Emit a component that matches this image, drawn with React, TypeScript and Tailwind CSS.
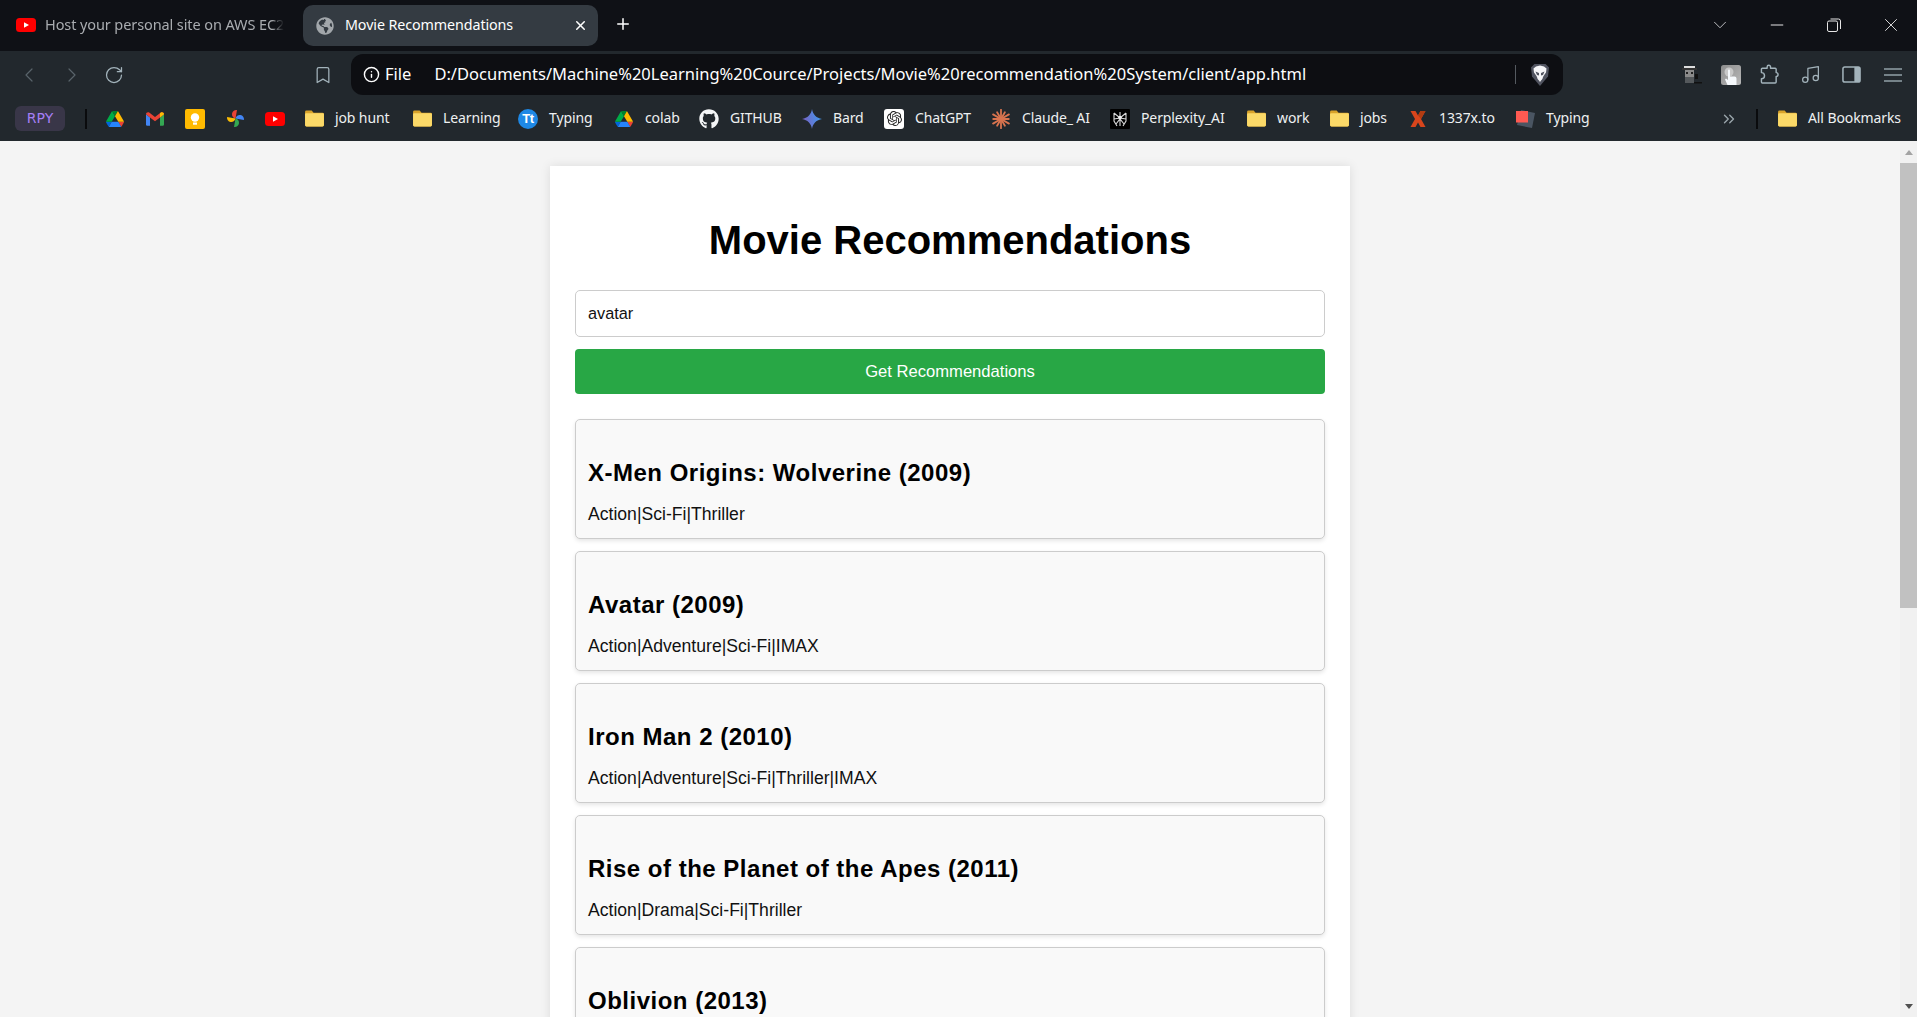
import React from "react";
import { ChevronLeft, ChevronRight, RotateCw, Bookmark, Info, Music, ChevronDown, ChevronsRight, Plus, X, Minus } from "lucide-react";
import { FaGithub, FaGlobeAmericas } from "react-icons/fa";
import { SiOpenai } from "react-icons/si";

const YT = ({ cls = "w-5 h-[14px]" }: { cls?: string }) => (
  <svg viewBox="0 0 20 14" className={cls}>
    <rect width="20" height="14" rx="3.5" fill="#ff0000" />
    <path d="M8 4.2 13 7l-5 2.8z" fill="#fff" />
  </svg>
);
const Drive = () => (
  <svg viewBox="0 0 87.3 78" className="w-[18px] h-[16px]">
    <path d="m6.6 66.85 3.85 6.65c.8 1.4 1.95 2.5 3.3 3.3l13.75-23.8h-27.5c0 1.55.4 3.1 1.2 4.5z" fill="#0066da" />
    <path d="m43.65 25-13.75-23.8c-1.35.8-2.5 1.9-3.3 3.3l-25.4 44a9.06 9.06 0 0 0 -1.2 4.5h27.5z" fill="#00ac47" />
    <path d="m73.55 76.8c1.35-.8 2.5-1.9 3.3-3.3l1.6-2.75 7.65-13.25c.8-1.4 1.2-2.95 1.2-4.5h-27.502l5.852 11.5z" fill="#ea4335" />
    <path d="m43.65 25 13.75-23.8c-1.35-.8-2.9-1.2-4.5-1.2h-18.5c-1.6 0-3.15.45-4.5 1.2z" fill="#00832d" />
    <path d="m59.8 53h-32.3l-13.75 23.8c1.35.8 2.9 1.2 4.5 1.2h50.8c1.6 0 3.15-.45 4.5-1.2z" fill="#2684fc" />
    <path d="m73.4 26.5-12.7-22c-.8-1.4-1.95-2.5-3.3-3.3l-13.75 23.8 16.15 28h27.45c0-1.55-.4-3.1-1.2-4.5z" fill="#ffba00" />
  </svg>
);
const Gmail = () => (
  <svg viewBox="0 0 18 14" className="w-[18px] h-[14px]">
    <path d="M0 2.2V12.6A1.2 1.2 0 0 0 1.2 13.8H4V5.5z" fill="#4285f4" />
    <path d="M18 2.2V12.6a1.2 1.2 0 0 1-1.2 1.2H14V5.5z" fill="#34a853" />
    <path d="M0 2.2C0 .6 1.8-.4 3.2.6L9 5 14.8.6C16.2-.4 18 .6 18 2.2L14 5.5 9 9.2 4 5.5z" fill="#ea4335" />
    <path d="M14 1.2 14.8.6C16.2-.4 18 .6 18 2.2L14 5.5z" fill="#fbbc04" />
  </svg>
);
const Keep = () => (
  <svg viewBox="0 0 20 20" className="w-5 h-5">
    <rect width="20" height="20" rx="2" fill="#ffba00" />
    <circle cx="10" cy="8.5" r="4.2" fill="#fff" />
    <rect x="8" y="13.5" width="4" height="2.2" fill="#fff" />
  </svg>
);
const Photos = () => (
  <svg viewBox="0 0 20 20" className="w-[19px] h-[19px]">
    <path d="M10 10V1A4.5 4.5 0 0 0 10 10z" fill="#ea4335" transform="rotate(10 10 10)" />
    <path d="M10 10V1A4.5 4.5 0 0 0 10 10z" fill="#4285f4" transform="rotate(100 10 10)" />
    <path d="M10 10V1A4.5 4.5 0 0 0 10 10z" fill="#34a853" transform="rotate(190 10 10)" />
    <path d="M10 10V1A4.5 4.5 0 0 0 10 10z" fill="#fbbc04" transform="rotate(280 10 10)" />
  </svg>
);
const Folder = () => (
  <svg viewBox="0 0 20 18" className="w-[19px] h-[17px]">
    <path d="M0 2a1.5 1.5 0 0 1 1.5-1.5H7l2 2.3h9.5A1.5 1.5 0 0 1 20 4.3V16a1.5 1.5 0 0 1-1.5 1.5h-17A1.5 1.5 0 0 1 0 16z" fill="#d9a32a" />
    <path d="M0 4.5A1 1 0 0 1 1 3.5h18a1 1 0 0 1 1 1V16a1.5 1.5 0 0 1-1.5 1.5h-17A1.5 1.5 0 0 1 0 16z" fill="#fbd968" />
  </svg>
);
const Tt = () => (
  <div className="w-5 h-5 rounded-full bg-[#1e88e5] flex items-center justify-center text-white font-bold text-[13px] leading-none tracking-[-0.5px] [font-family:'Liberation_Sans',sans-serif]">Tt</div>
);
const Bard = () => (
  <svg viewBox="0 0 20 20" className="w-5 h-5">
    <defs>
      <linearGradient id="bard" x1="0" y1="0.6" x2="1" y2="0.4">
        <stop offset="0" stopColor="#7b5fc0" />
        <stop offset="1" stopColor="#3f9bf0" />
      </linearGradient>
    </defs>
    <path d="M10 0C10.8 5.5 14.500 9.200 20 10 14.500 10.800 10.800 14.500 10 20 9.200 14.500 5.500 10.800 0 10 5.500 9.200 9.200 5.500 10 0z" fill="url(#bard)" />
  </svg>
);
const Gpt = () => (
  <div className="w-5 h-5 rounded-[3px] bg-white flex items-center justify-center text-[#222]">
    <SiOpenai size={15} />
  </div>
);
const Claude = () => (
  <svg viewBox="0 0 20 20" className="w-5 h-5" stroke="#d9744f" strokeWidth="1.8" strokeLinecap="round">
    {[0, 30, 60, 90, 120, 150, 180, 210, 240, 270, 300, 330].map((a) => (
      <line key={a} x1="10" y1="10" x2="10" y2={a % 60 === 0 ? 0.8 : 2.2} transform={`rotate(${a} 10 10)`} />
    ))}
  </svg>
);
const Perplexity = () => (
  <svg viewBox="0 0 20 20" className="w-5 h-5">
    <rect width="20" height="20" rx="1" fill="#000" />
    <g stroke="#d8d8d8" strokeWidth="1.1" fill="none">
      <path d="M10 3v14M4 4l6 5 6-5M4 4v8l3 5M16 4v8l-3 5M4 10l6-1 6 1M6 15l4-5 4 5" />
    </g>
    <circle cx="10" cy="8.500" r="1.800" fill="#eee" />
  </svg>
);
const XLogo = () => (
  <svg viewBox="0 0 16 16" className="w-[16px] h-[16px]">
    <path d="M0.500 0h5L8 4.500 10.500 0h5L11 8l4.500 8h-5L8 11.500 5.500 16h-5L5 8z" fill="#d8451c" />
    <path d="M8 4.500 10.500 0h5L11 8z" fill="#b23c12" />
  </svg>
);
const Cards = () => (
  <svg viewBox="0 0 20 20" className="w-5 h-5">
    <path d="M6 1 20 4l-3 15L2 16z" fill="#4a5562" />
    <rect x="1" y="2" width="12" height="11.500" fill="#ff5a52" />
  </svg>
);
const Brave = () => (
  <svg viewBox="0 0 18 22" className="w-[18px] h-[22px]">
    <path d="M3.500 0h11L18 3.500l-1 9L9 22l-8-9.500-1-9z" fill="#50535f" />
    <path d="M5 2.500 9 1.500l4 1 2.500 2-.5 4-2.500 3.500-1.500 3.500h-4L5.500 12 3 8.500l-.5-4z" fill="#f5f5f7" />
    <path d="M4.500 7.500 8 9v2.500L6 11zM13.500 7.500 10 9v2.500l2-.5z" fill="#50535f" />
    <path d="M6.500 14.500 9 13l2.500 1.500L9 18z" fill="#f5f5f7" />
  </svg>
);
const Spy = () => (
  <svg viewBox="0 0 22 22" className="w-[22px] h-[22px]">
    <rect x="3" y="2" width="11" height="2" fill="#ddd" />
    <rect x="1" y="4" width="15" height="2" fill="#333" />
    <rect x="4" y="6" width="9" height="7" fill="#8a8a8a" />
    <rect x="5" y="8" width="2" height="2" fill="#222" />
    <rect x="10" y="8" width="2" height="2" fill="#222" />
    <rect x="4" y="13" width="9" height="6" fill="#55595c" />
    <rect x="14" y="10" width="3" height="5" fill="#111" />
    <rect x="13" y="18" width="8" height="1.500" fill="#111" />
  </svg>
);
const Touch = () => (
  <svg viewBox="0 0 20 20" className="w-5 h-5">
    <defs>
      <linearGradient id="tg" x1="0" y1="0" x2="1" y2="1">
        <stop offset="0" stopColor="#8d8d8d" />
        <stop offset="1" stopColor="#b8b8b8" />
      </linearGradient>
    </defs>
    <rect width="20" height="20" rx="2.500" fill="url(#tg)" />
    <circle cx="8" cy="7" r="4.500" fill="#c8c8c8" />
    <path d="M7 5.500a1 1 0 0 1 2 0v6h4.500a2 2 0 0 1 2 2V20h-9L4 14.500l1-1 2 1.500z" fill="#f5f8fb" />
  </svg>
);
const PuzzleIcon = () => (
  <svg viewBox="0 0 20 22" className="w-[19px] h-[21px]" fill="none" stroke="#a3b3bb" strokeWidth="1.500" strokeLinejoin="round">
    <path d="M2.500 4.500H7.500V3a1.800 1.800 0 0 1 3.600 0v1.500H16a1 1 0 0 1 1 1V9a2 2 0 0 1 0 4v6a1 1 0 0 1-1 1H2.500a1 1 0 0 1-1-1v-3.500a3.200 3.200 0 0 0 0-6.500V5.500a1 1 0 0 1 1-1z" />
  </svg>
);
const SidePanel = () => (
  <svg viewBox="0 0 20 20" className="w-[19px] h-[19px]">
    <rect x="1" y="2" width="18" height="16" rx="2" fill="none" stroke="#a3b3bb" strokeWidth="1.600" />
    <rect x="13" y="2" width="6" height="16" rx="1" fill="#a3b3bb" />
  </svg>
);
const Hamburger = () => (
  <svg viewBox="0 0 18 14" className="w-[18px] h-[14px]" stroke="#a3b3bb" strokeWidth="1.300">
    <line x1="0" y1="1" x2="18" y2="1" />
    <line x1="0" y1="7" x2="18" y2="7" />
    <line x1="0" y1="13" x2="18" y2="13" />
  </svg>
);

const bookmarks: { w: string; icon: React.ReactNode; label?: string }[] = [
  { w: "w-[40px]", icon: <Drive /> },
  { w: "w-[40px]", icon: <Gmail /> },
  { w: "w-[40px]", icon: <Keep /> },
  { w: "w-[40px]", icon: <Photos /> },
  { w: "w-[39px]", icon: <YT /> },
  { w: "w-[108px]", icon: <Folder />, label: "job hunt" },
  { w: "w-[106px]", icon: <Folder />, label: "Learning" },
  { w: "w-[96px]", icon: <Tt />, label: "Typing" },
  { w: "w-[85px]", icon: <Drive />, label: "colab" },
  { w: "w-[103px]", icon: <FaGithub size={20} color="#f4f6f7" />, label: "GITHUB" },
  { w: "w-[82px]", icon: <Bard />, label: "Bard" },
  { w: "w-[107px]", icon: <Gpt />, label: "ChatGPT" },
  { w: "w-[119px]", icon: <Claude />, label: "Claude_ AI" },
  { w: "w-[136px]", icon: <Perplexity />, label: "Perplexity_AI" },
  { w: "w-[83px]", icon: <Folder />, label: "work" },
  { w: "w-[79px]", icon: <Folder />, label: "jobs" },
  { w: "w-[107px]", icon: <XLogo />, label: "1337x.to" },
  { w: "w-[100px]", icon: <Cards />, label: "Typing" },
];

const movies = [
  ["X-Men Origins: Wolverine (2009)", "Action|Sci-Fi|Thriller"],
  ["Avatar (2009)", "Action|Adventure|Sci-Fi|IMAX"],
  ["Iron Man 2 (2010)", "Action|Adventure|Sci-Fi|Thriller|IMAX"],
  ["Rise of the Planet of the Apes (2011)", "Action|Drama|Sci-Fi|Thriller"],
  ["Oblivion (2013)", "Action|Adventure|Sci-Fi|Thriller"],
];

const chrome = "[font-family:'Noto_Sans','Open_Sans',sans-serif]";

export default function App() {
  return (
    <div className="h-screen w-full flex flex-col overflow-hidden bg-[#f4f4f4]">
      <div className={`h-[51px] shrink-0 bg-[#0f1116] flex items-start ${chrome}`}>
        <div className="w-[303px] h-[41px] mt-[5px] flex items-center pl-[16px] pr-[14px] gap-[9px] shrink-0 pb-[1px]">
          <YT cls="w-5 h-[14px] shrink-0" />
          <span className="text-[14.5px] text-[#a9acb0] whitespace-nowrap tracking-[-0.1px] [mask-image:linear-gradient(to_left,transparent,black_12px)]">Host your personal site on AWS EC2</span>
        </div>
        <div className="w-[295px] h-[41px] mt-[5px] rounded-[10px] bg-[#343b42] flex items-center pl-[13px] pr-[10px] shrink-0">
          <FaGlobeAmericas size={18} color="#a2a7ab" />
          <span className="ml-[11px] mb-[2px] text-[14.3px] text-white tracking-[-0.1px] whitespace-nowrap">Movie Recommendations</span>
          <X size={15} color="#fff" strokeWidth={2.4} className="ml-auto" />
        </div>
        <div className="w-[50px] h-[46px] flex items-center justify-center shrink-0 mt-[1px]">
          <Plus size={18} color="#fff" strokeWidth={2} />
        </div>
        <div className="ml-auto flex items-center h-[50px] translate-x-[2px]">
          <div className="w-[57px] flex justify-center"><ChevronDown size={22} color="#c9cbce" strokeWidth={1} /></div>
          <div className="w-[57px] flex justify-center"><Minus size={20} color="#e6e6e6" strokeWidth={1.2} /></div>
          <div className="w-[57px] flex justify-center">
            <svg viewBox="0 0 14 14" className="w-[14px] h-[14px]" fill="none" stroke="#e6e6e6" strokeWidth="1">
              <rect x="0.5" y="3" width="10" height="10.500" rx="1.500" />
              <path d="M3.500 1h8a2 2 0 0 1 2 2v8" />
            </svg>
          </div>
          <div className="w-[57px] flex justify-center"><X size={22} color="#e6e6e6" strokeWidth={1} /></div>
        </div>
      </div>

      <div className={`h-[47px] shrink-0 bg-[#22282d] flex items-center pl-[8px] ${chrome}`}>
        <div className="w-[42px] flex justify-center"><ChevronLeft size={24} color="#59636a" strokeWidth={1.2} /></div>
        <div className="w-[43px] flex justify-center"><ChevronRight size={24} color="#59636a" strokeWidth={1.2} /></div>
        <div className="w-[42px] flex justify-center"><RotateCw size={20} color="#a3b3bb" strokeWidth={1.5} /></div>
        <div className="w-[42px] ml-[167px] flex justify-center"><Bookmark size={20} color="#a3b3bb" strokeWidth={1.5} /></div>
        <div className="ml-[7px] w-[1212px] h-[41px] rounded-[12px] bg-[#0d0e12] flex items-center pl-[12px] shrink-0">
          <Info size={17} color="#fff" strokeWidth={2} />
          <span className="ml-[5px] text-[16.5px] text-white">File</span>
          <span className="ml-[23px] text-[16.5px] text-white whitespace-nowrap">D:/Documents/Machine%20Learning%20Cource/Projects/Movie%20recommendation%20System/client/app.html</span>
          <div className="ml-auto w-px h-[19px] bg-[#555a60]" />
          <div className="w-[47px] flex justify-center"><Brave /></div>
        </div>
        <div className="flex items-center ml-[109px]">
          <div className="w-[40px] flex justify-center"><Spy /></div>
          <div className="w-[38px] flex justify-center"><Touch /></div>
          <div className="w-[39px] flex justify-center"><PuzzleIcon /></div>
          <div className="w-[42px] flex justify-center"><Music size={21} color="#a3b3bb" strokeWidth={1.400} /></div>
          <div className="w-[41px] flex justify-center"><SidePanel /></div>
          <div className="w-[42px] flex justify-center"><Hamburger /></div>
        </div>
      </div>

      <div className={`h-[43px] shrink-0 bg-[#22282d] flex items-center pb-[2px] ${chrome}`}>
        <div className="ml-[15px] w-[50px] h-[25px] rounded-[6px] bg-[#393648] flex items-center justify-center text-[#a57ef5] text-[14px] font-medium [font-family:'DejaVu_Sans',sans-serif] shrink-0">RPY</div>
        <div className="ml-[20px] w-[2px] h-[20px] bg-[#0a0b0d] shrink-0" />
        <div className="ml-[18px] flex items-center shrink-0">
          {bookmarks.map((b, i) => (
            <div key={i} className={`${b.w} flex items-center gap-[11px] shrink-0`}>
              <div className="w-5 h-5 flex items-center justify-center shrink-0">{b.icon}</div>
              {b.label && <span className="text-[14px] mb-[2px] text-[#eef0f1] whitespace-nowrap tracking-[-0.12px]">{b.label}</span>}
            </div>
          ))}
        </div>
        <div className="ml-[105px] flex items-center"><ChevronsRight size={18} color="#9aa5ab" strokeWidth={1.8} /></div>
        <div className="ml-[18px] w-[2px] h-[20px] bg-[#0a0b0d]" />
        <div className="ml-[20px] flex items-center gap-[11px]">
          <Folder />
          <span className="text-[14px] mb-[2px] text-[#eef0f1] whitespace-nowrap tracking-[-0.1px]">All Bookmarks</span>
        </div>
      </div>

      <div className="flex-1 min-h-0 flex">
        <div className="flex-1 min-w-0 overflow-hidden pt-[25px] [font-family:'Liberation_Sans',Arial,sans-serif]">
          <div className="w-[800px] mx-auto bg-white px-[25px] pt-[51px] shadow-[0_0_10px_rgba(0,0,0,0.1)]">
            <h1 className="text-[40px] font-bold text-center text-black leading-[46px]">Movie Recommendations</h1>
            <div className="mt-[27px] h-[47px] border border-[#ccc] rounded-[5px] bg-white flex items-center px-[12px] pb-[1px] text-[16.3px] text-[#111]">avatar</div>
            <div className="mt-[12px] h-[45px] rounded-[4px] bg-[#28a745] flex items-center justify-center pt-[1px] text-white text-[16.6px]">Get Recommendations</div>
            <div className="mt-[25px] flex flex-col gap-[12px]">
              {movies.map(([t, g]) => (
                <div key={t} className="h-[120px] shrink-0 border border-[#ccc] rounded-[5px] bg-[#f9f9f9] shadow-[0_2px_4px_rgba(0,0,0,0.1)] px-[12px] pt-[39px]">
                  <h3 className="text-[24px] font-bold text-black leading-[28px] tracking-[0.5px]">{t}</h3>
                  <p className="mt-[17px] text-[17.6px] text-[#111] leading-[20px]">{g}</p>
                </div>
              ))}
            </div>
          </div>
        </div>
        <div className="w-[17px] shrink-0 bg-[#f1f1f1] flex flex-col items-center">
          <div className="h-[22px] flex items-center justify-center">
            <div className="w-0 h-0 border-x-[4px] border-x-transparent border-b-[5px] border-b-[#a3a3a3]" />
          </div>
          <div className="w-full h-[445px] bg-[#c1c1c1]" />
          <div className="mt-auto h-[22px] flex items-center justify-center">
            <div className="w-0 h-0 border-x-[4px] border-x-transparent border-t-[5px] border-t-[#505050]" />
          </div>
        </div>
      </div>
    </div>
  );
}
